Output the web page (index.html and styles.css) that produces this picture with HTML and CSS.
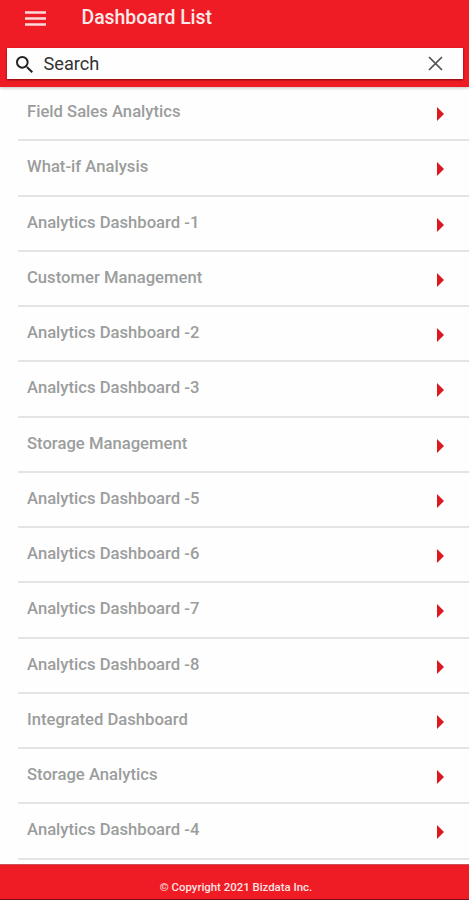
FILE: index.html
```
<!DOCTYPE html>
<html lang="en">

<head>
  <meta charset="utf-8">
  <title>Dashboard List</title>
  <link rel="stylesheet" href="styles.css">
</head>

<body>
  <header class="header">
    <div class="title-bar">
      <svg class="menu-icon" viewBox="0 0 21 15">
        <path d="M0 1.5h21M0 7.5h21M0 13.5h21" />
      </svg>
      <h1>Dashboard List</h1>
    </div>
    <div class="search-box">
      <svg class="search-icon" viewBox="3 3 17.5 17.5">
        <path d="M15.5 14h-.79l-.28-.27A6.47 6.47 0 0 0 16 9.5 6.5 6.5 0 1 0 9.5 16c1.61 0 3.09-.59 4.23-1.57l.27.28v.79l5 4.99L20.49 19l-4.99-5zm-6 0C7.01 14 5 11.99 5 9.5S7.01 5 9.5 5 14 7.01 14 9.5 11.99 14 9.5 14z" />
      </svg>
      <span class="search-text">Search</span>
      <svg class="clear-icon" viewBox="0 0 15 15">
        <path d="M1 1l13 13M14 1L1 14" />
      </svg>
    </div>
  </header>

  <ul class="dashboard-list">
    <li><span>Field Sales Analytics</span><i class="arrow"></i></li>
    <li><span>What-if Analysis</span><i class="arrow"></i></li>
    <li><span>Analytics Dashboard -1</span><i class="arrow"></i></li>
    <li><span>Customer Management</span><i class="arrow"></i></li>
    <li><span>Analytics Dashboard -2</span><i class="arrow"></i></li>
    <li><span>Analytics Dashboard -3</span><i class="arrow"></i></li>
    <li><span>Storage Management</span><i class="arrow"></i></li>
    <li><span>Analytics Dashboard -5</span><i class="arrow"></i></li>
    <li><span>Analytics Dashboard -6</span><i class="arrow"></i></li>
    <li><span>Analytics Dashboard -7</span><i class="arrow"></i></li>
    <li><span>Analytics Dashboard -8</span><i class="arrow"></i></li>
    <li><span>Integrated Dashboard</span><i class="arrow"></i></li>
    <li><span>Storage Analytics</span><i class="arrow"></i></li>
    <li><span>Analytics Dashboard -4</span><i class="arrow"></i></li>
  </ul>

  <footer class="footer">&copy; Copyright 2021 Bizdata Inc.</footer>
</body>

</html>
```
FILE: styles.css
```
* {
  box-sizing: border-box;
}

body {
  margin: 0;
  height: 900px;
  display: flex;
  flex-direction: column;
  overflow: hidden;
  background-color: #fefefe;
  font-family: Roboto, sans-serif;
}

/* Red header with title and search */
.header {
  flex: none;
  height: 87px;
  padding: 0 6px 0 7px;
  background-color: #ef1c25;
  box-shadow: 0 1px 3px rgba(0, 0, 0, 0.25);
}

.title-bar {
  display: flex;
  align-items: center;
  height: 36px;
  padding-left: 18px;
}

.menu-icon {
  width: 21px;
  height: 15px;
  stroke: #fbd9da;
  stroke-width: 2.6;
}

h1 {
  margin: 0 0 0 35.5px;
  color: #fdeaea;
  font-size: 19.4px;
  font-weight: 500;
  line-height: 36px;
}

.search-box {
  display: flex;
  align-items: center;
  height: 31px;
  margin-top: 12px;
  padding: 0 20px 0 9px;
  background-color: #fefefe;
  box-shadow: 0 1px 2px rgba(80, 0, 0, 0.7);
}

.search-icon {
  width: 17px;
  height: 17px;
  margin-top: 2px;
  fill: #222;
}

.search-text {
  flex: 1;
  margin-left: 10.5px;
  color: #333;
  font-size: 18.2px;
}

.clear-icon {
  width: 15px;
  height: 15px;
  fill: none;
  stroke: #505050;
  stroke-width: 1.7;
}

/* List rows */
.dashboard-list {
  flex: none;
  height: 777px;
  margin: 0;
  padding: 0 0 0 18px;
  list-style: none;
}

.dashboard-list li {
  display: flex;
  align-items: center;
  justify-content: space-between;
  height: 55.27px;
  padding: 0 25px 2.4px 9px;
  border-bottom: 2px solid #e4e4e4;
  color: #9b9d9d;
  font-size: 16.65px;
  font-weight: 500;
}

.dashboard-list li:first-child {
  height: 54.3px;
}

.arrow {
  margin-top: 5px;
  border-left: 7px solid #dc1820;
  border-top: 7px solid transparent;
  border-bottom: 7px solid transparent;
}

/* Footer */
.footer {
  flex: none;
  height: 36px;
  padding-left: 3px;
  border-top: 1px solid #c9545a;
  border-bottom: 1px solid #7a1015;
  background-color: #ef1c25;
  color: #fde3e3;
  font-size: 11.4px;
  font-weight: 500;
  line-height: 45px;
  text-align: center;
}
```
